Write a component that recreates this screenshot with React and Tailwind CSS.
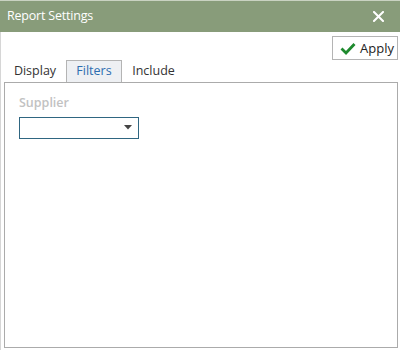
import React from "react";

export default function App() {
  return (
    <div className="w-[400px] h-[350px] bg-white overflow-hidden flex flex-col" style={{ fontFamily: '"Open Sans", "Noto Sans", sans-serif' }}>
      <div className="h-[1px] bg-[#c9d2c1]" />
      <div className="h-[31px] bg-[#889c7a] flex items-center justify-between pl-[7px] pr-[16px]">
        <span className="text-white text-[12.5px] leading-none tracking-[-0.2px]">Report Settings</span>
        <svg width="11" height="11" viewBox="0 0 11 11">
          <path d="M1 1 L10 10 M10 1 L1 10" stroke="#ffffff" strokeWidth="2" strokeLinecap="square" />
        </svg>
      </div>
      <div className="flex-1 flex flex-col border-l border-[#d6d6d6]">
        <div className="flex justify-end pt-[4px] pr-[2px]">
          <button className="w-[66px] h-[24px] border border-[#b4b4b4] bg-white flex items-center pl-[7px] gap-[4px]">
            <svg width="16" height="13" viewBox="0 0 16 13">
              <path d="M1.5 6.5 L6 11 L14.5 2" stroke="#1e8a2e" strokeWidth="2.8" fill="none" strokeLinecap="butt" strokeLinejoin="miter" />
            </svg>
            <span className="text-[13px] leading-none text-[#222]">Apply</span>
          </button>
        </div>
        <div className="flex h-[22px] ml-[3px]">
          <div className="w-[62px] flex items-center justify-center text-[12.5px] text-[#333]">Display</div>
          <div className="w-[56px] flex items-center justify-center text-[12.5px] text-[#2d6db0] bg-[#eef0f3] border-t border-l border-r border-[#b4b4b4]">Filters</div>
          <div className="w-[63px] flex items-center justify-center text-[12.5px] text-[#333]">Include</div>
        </div>
        <div className="h-[266px] ml-[3px] mr-[2px] border border-[#ababab] pt-[14px] pl-[14px]">
          <div className="text-[12.5px] font-semibold text-[#c2c2c2] leading-none">Supplier</div>
          <div className="mt-[7px] w-[120px] h-[22px] border border-[#2f6681] flex items-center justify-end pr-[6px]">
            <svg width="8" height="5" viewBox="0 0 8 5">
              <path d="M0 0 L8 0 L4 4.5 Z" fill="#444" />
            </svg>
          </div>
        </div>
      </div>
    </div>
  );
}
